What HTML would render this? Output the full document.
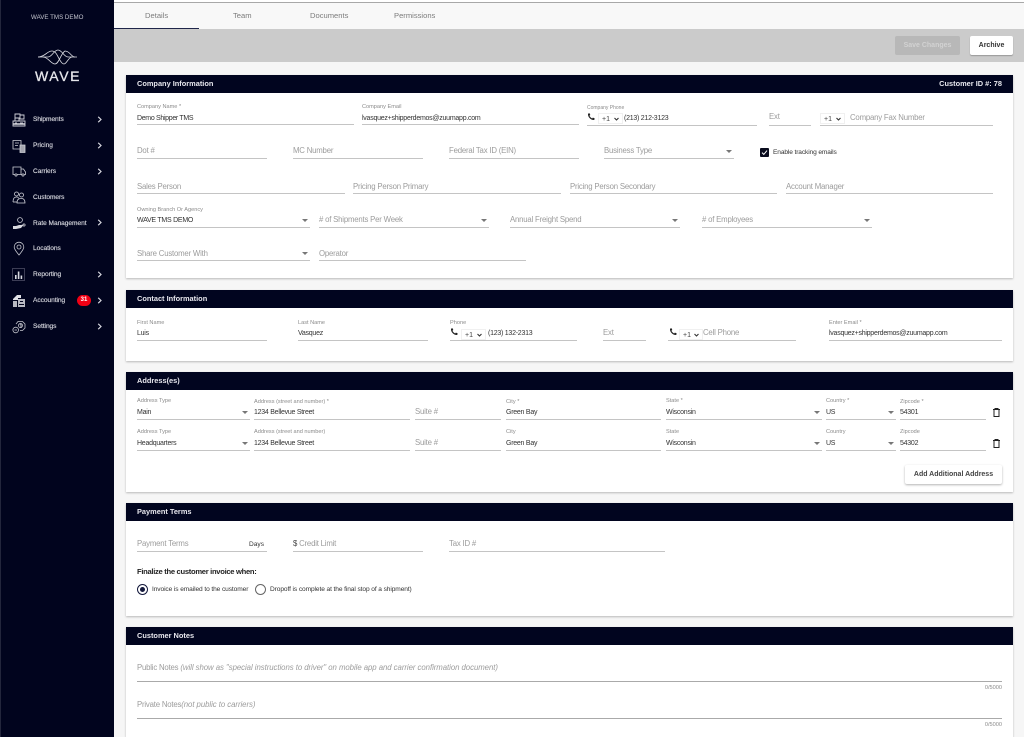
<!DOCTYPE html>
<html><head><meta charset="utf-8"><style>
*{box-sizing:border-box}
html,body{margin:0;padding:0;width:1024px;height:737px;overflow:hidden;background:#f6f6f6;font-family:"Liberation Sans",sans-serif}
#p{position:relative;width:1024px;height:737px;overflow:hidden;filter:blur(.35px)}
.a,.l,.v,.h,.u,.n,.c,.hd,.sel{position:absolute}
.l{font-size:5.6px;color:#8b8b8b;white-space:nowrap;line-height:7px;margin-top:1px}
.v{font-size:7px;letter-spacing:-.25px;color:#333;white-space:nowrap;line-height:10px;margin-top:1px}
.s{font-size:6.6px;margin-top:0}
.h{font-size:7.8px;color:#9c9c9c;white-space:nowrap;line-height:10px;letter-spacing:-.2px}
.h i{letter-spacing:-.05px}
.u{height:1px;background:#c4c4c4}
.c{left:126px;width:887px;background:#fff;box-shadow:0 1px 2px rgba(0,0,0,.25)}
.hd{left:126px;width:887px;height:18px;background:#01051f;color:#e8e8ee;font-size:7.4px;font-weight:bold;line-height:18px;padding-left:11px}
.n{left:33px;color:#d5d6dd;font-size:6.6px;letter-spacing:-.05px;-webkit-text-stroke:.15px #d5d6dd;line-height:10px;white-space:nowrap;margin-top:1px}
.ch{position:absolute;left:97px;width:5px;height:7px}
.ar{position:absolute;width:0;height:0;border-left:3px solid transparent;border-right:3px solid transparent;border-top:3px solid #777}
.sel{font-size:7px;color:#444;height:11px;width:25px;line-height:11px;padding-left:3px;background:#fff;border:1px solid #f0f0f0}
.sel svg{position:absolute;right:3px;top:3px}
svg{position:absolute;overflow:visible}
</style></head><body><div id="p">

<!-- sidebar -->
<div class="a" style="left:0;top:0;width:114px;height:737px;background:#01041e;border-left:1px solid #23263c"></div>
<div class="a" style="left:31px;top:14px;color:#c4c5cf;font-size:6.2px;line-height:8px;white-space:nowrap">WAVE TMS DEMO</div>
<svg style="left:37px;top:48px" width="41" height="18" viewBox="0 0 41 18" fill="none" stroke="#d9dae0" stroke-width=".8">
<path d="M1 9H11C15 9 17 2 21 2S27 9 31 9H40"/><path d="M1 9C8 9 10 3 15 3S21 11 25 15S31 9 35 9"/><path d="M6 9C11 9 14 16 18 16S24 5 28 3C33 3 34 9 38 9"/></svg>
<div class="a" style="left:35px;top:69px;width:48px;color:#e6e6eb;font-size:14px;line-height:15px;letter-spacing:1.6px;-webkit-text-stroke:.3px #e6e6eb;white-space:nowrap">WAVE</div>

<div class="n" style="top:114px;">Shipments</div>
<div class="n" style="top:140px;">Pricing</div>
<div class="n" style="top:166px;">Carriers</div>
<div class="n" style="top:192px;">Customers</div>
<div class="n" style="top:218px;">Rate Management</div>
<div class="n" style="top:243px;">Locations</div>
<div class="n" style="top:269px;">Reporting</div>
<div class="n" style="top:295px;">Accounting</div>
<div class="n" style="top:321px;">Settings</div>

<svg class="ch" style="top:116px" viewBox="0 0 5 7" fill="none" stroke="#d5d6dd" stroke-width="1.2"><path d="M1.2 .8L4 3.5L1.2 6.2"/></svg>
<svg class="ch" style="top:142px" viewBox="0 0 5 7" fill="none" stroke="#d5d6dd" stroke-width="1.2"><path d="M1.2 .8L4 3.5L1.2 6.2"/></svg>
<svg class="ch" style="top:168px" viewBox="0 0 5 7" fill="none" stroke="#d5d6dd" stroke-width="1.2"><path d="M1.2 .8L4 3.5L1.2 6.2"/></svg>
<svg class="ch" style="top:219px" viewBox="0 0 5 7" fill="none" stroke="#d5d6dd" stroke-width="1.2"><path d="M1.2 .8L4 3.5L1.2 6.2"/></svg>
<svg class="ch" style="top:271px" viewBox="0 0 5 7" fill="none" stroke="#d5d6dd" stroke-width="1.2"><path d="M1.2 .8L4 3.5L1.2 6.2"/></svg>
<svg class="ch" style="top:297px" viewBox="0 0 5 7" fill="none" stroke="#d5d6dd" stroke-width="1.2"><path d="M1.2 .8L4 3.5L1.2 6.2"/></svg>
<svg class="ch" style="top:323px" viewBox="0 0 5 7" fill="none" stroke="#d5d6dd" stroke-width="1.2"><path d="M1.2 .8L4 3.5L1.2 6.2"/></svg>

<!-- nav icons -->
<svg style="left:12px;top:113px" width="14" height="14" viewBox="0 0 14 14" fill="none" stroke="#d0d1d8" stroke-width=".9"><path d="M3 1H8V5H3ZM8 2H12V6H8ZM1 8H13V13H1Z"/><path d="M3 5V8M7 5V8M3 10H5M8 10H11" /><path d="M1 11H13" stroke-width="1.6"/></svg>
<svg style="left:12px;top:139px" width="14" height="14" viewBox="0 0 14 14" fill="none" stroke="#d0d1d8" stroke-width=".8"><path d="M1 1.5H9V10H1ZM3 4H7M3 6.5H6"/><path d="M8 6H13V13.5H8Z" fill="#a5a6b0"/></svg>
<svg style="left:12px;top:165px" width="14" height="12" viewBox="0 0 14 12" fill="none" stroke="#d0d1d8" stroke-width=".8"><path d="M3 9.5H1V2H9V9.5H5M9 4H11.5L13.5 7V9.5H12M9 9.5H10"/><circle cx="4" cy="10" r="1.1"/><circle cx="11" cy="10" r="1.1"/></svg>
<svg style="left:12px;top:191px" width="14" height="13" viewBox="0 0 14 13" fill="none" stroke="#d0d1d8" stroke-width=".8"><circle cx="4.5" cy="3" r="2"/><circle cx="9.5" cy="4" r="2"/><path d="M1 11C1 7 3 6 4.5 6S7 7 7 8M5 12C5 8 7 7.5 9.5 7.5S13 9 13 12Z"/><path d="M1 11H5"/></svg>
<svg style="left:12px;top:217px" width="14" height="14" viewBox="0 0 14 14" fill="none" stroke="#d0d1d8" stroke-width=".8"><circle cx="8" cy="3" r="2.4"/><path d="M1 9H4L7 8H9L12 7.5L9 11L4 12H1Z" fill="#d8d9df" stroke="none"/><circle cx="12" cy="8" r="1.1"/></svg>
<svg style="left:13px;top:242px" width="12" height="14" viewBox="0 0 12 14" fill="none" stroke="#c4c5cd" stroke-width=".8"><path d="M6 13C3 9 1.2 7.5 1.2 5A4.8 4.8 0 0 1 10.8 5C10.8 7.5 9 9 6 13Z"/><circle cx="6" cy="5" r="2"/></svg>
<svg style="left:12px;top:268px" width="13" height="13" viewBox="0 0 13 13"><rect x=".5" y=".5" width="12" height="12" fill="none" stroke="#4b4d63" stroke-width=".8"/><path d="M3 7H4.6V11H3ZM5.8 3.5H7.4V11H5.8ZM8.6 7.5H10.2V11H8.6Z" fill="#d8d9df"/></svg>
<svg style="left:12px;top:294px" width="14" height="14" viewBox="0 0 14 14" fill="#b9bac3"><path d="M1 5L5 1H9V4H6V6H1Z" fill="#e0e1e6"/><path d="M1 7H5V13H1ZM6 5H13V13H6Z"/><path d="M8 7H11V8H8ZM7 10H12V11H7Z" fill="#01041e"/></svg>
<svg style="left:12px;top:320px" width="14" height="14" viewBox="0 0 14 14" fill="none" stroke="#c4c5cd" stroke-width=".8"><path d="M4 4L6 1.5H10.5L13 4V8L10.5 10.5H8"/><circle cx="8.5" cy="5.5" r="2"/><path d="M9 8V4H7.5" stroke-width="1"/><circle cx="3.7" cy="10" r="2.8"/><path d="M2.5 10H5"/></svg>

<div class="a" style="left:77px;top:295px;width:14px;height:11px;border-radius:6px;background:#f00014;color:#fff;font-size:6px;font-weight:bold;line-height:11px;text-align:center">31</div>

<!-- top -->
<div class="a" style="left:114px;top:0;width:910px;height:3px;background:#fff;border-bottom:1px solid #a8a8a8;border-top:1px solid #fff"></div>
<div class="a" style="left:114px;top:3px;width:910px;height:26px;background:#f8f8f8"></div>
<div class="a" style="left:114px;top:28px;width:85px;height:1px;background:#20264a"></div>
<div class="a" style="left:145px;top:11px;font-size:7.6px;color:#7c7c7c;line-height:10px">Details</div>
<div class="a" style="left:233px;top:11px;font-size:7.6px;color:#7c7c7c;line-height:10px">Team</div>
<div class="a" style="left:310px;top:11px;font-size:7.6px;color:#7c7c7c;line-height:10px">Documents</div>
<div class="a" style="left:394px;top:11px;font-size:7.6px;color:#7c7c7c;line-height:10px">Permissions</div>
<div class="a" style="left:114px;top:29px;width:910px;height:33px;background:#cbcbcb"></div>
<div class="a" style="left:895px;top:36px;width:65px;height:19px;border-radius:2px;background:#b8b8b8;color:#d2d2d2;font-size:7px;font-weight:bold;line-height:19px;text-align:center">Save Changes</div>
<div class="a" style="left:970px;top:36px;width:43px;height:19px;border-radius:2px;background:#fff;color:#333;font-size:7px;font-weight:bold;line-height:19px;text-align:center;box-shadow:0 1px 1px rgba(0,0,0,.25)">Archive</div>

<!-- cards -->
<div class="c" style="top:75px;height:203px"></div>
<div class="c" style="top:290px;height:71px"></div>
<div class="c" style="top:372px;height:120px"></div>
<div class="c" style="top:503px;height:113px"></div>
<div class="c" style="top:627px;height:110px"></div>
<div class="hd" style="top:75px">Company Information<span style="position:absolute;right:11px;top:0">Customer ID #: 78</span></div>
<div class="hd" style="top:290px">Contact Information</div>
<div class="hd" style="top:372px">Address(es)</div>
<div class="hd" style="top:503px">Payment Terms</div>
<div class="hd" style="top:627px">Customer Notes</div>

<!-- Company row 1 -->
<div class="l" style="left:137px;top:103px">Company Name *</div>
<div class="v" style="left:137px;top:113px;letter-spacing:-.32px">Demo Shipper TMS</div>
<div class="u" style="left:137px;top:124px;width:217px"></div>
<div class="l" style="left:362px;top:103px">Company Email</div>
<div class="v" style="left:362px;top:113px">lvasquez+shipperdemos@zuumapp.com</div>
<div class="u" style="left:362px;top:124px;width:217px"></div>
<div class="l" style="left:587px;top:104px;font-size:5px">Company Phone</div>
<svg style="left:587px;top:113px" width="8" height="8" viewBox="0 0 8 8"><path d="M1 .6L2.6.3L3.3 2L2.4 2.8C2.9 3.9 3.9 4.9 5.1 5.5L5.9 4.6L7.6 5.3L7.3 7C4 7.4.6 4 1 .6Z" fill="#222"/></svg>
<div class="sel" style="left:598px;top:113px">+1<svg width="5" height="4" viewBox="0 0 5 4" fill="none" stroke="#333" stroke-width="1.1"><path d="M.5 1L2.5 3L4.5 1"/></svg></div>
<div class="v" style="left:624px;top:113px">(213) 212-3123</div>
<div class="u" style="left:587px;top:125px;width:170px"></div>
<div class="h" style="left:769px;top:112px">Ext</div>
<div class="u" style="left:769px;top:125px;width:42px"></div>
<div class="sel" style="left:820px;top:113px">+1<svg width="5" height="4" viewBox="0 0 5 4" fill="none" stroke="#333" stroke-width="1.1"><path d="M.5 1L2.5 3L4.5 1"/></svg></div>
<div class="h" style="left:850px;top:113px">Company Fax Number</div>
<div class="u" style="left:820px;top:125px;width:173px"></div>

<!-- row 2 -->
<div class="h" style="left:137px;top:146px">Dot #</div><div class="u" style="left:137px;top:158px;width:130px"></div>
<div class="h" style="left:293px;top:146px">MC Number</div><div class="u" style="left:293px;top:158px;width:130px"></div>
<div class="h" style="left:449px;top:146px">Federal Tax ID (EIN)</div><div class="u" style="left:449px;top:158px;width:130px"></div>
<div class="h" style="left:604px;top:146px">Business Type</div><div class="u" style="left:604px;top:158px;width:130px"></div>
<div class="ar" style="left:726px;top:150px"></div>
<div class="a" style="left:760px;top:148px;width:9px;height:9px;background:#0a0c1e;border-radius:1px"></div>
<svg style="left:760px;top:148px" width="9" height="9" viewBox="0 0 9 9" fill="none" stroke="#fff" stroke-width="1"><path d="M2 4.6L3.8 6.4L7 2.6"/></svg>
<div class="v s" style="left:773px;top:148px;letter-spacing:-.12px">Enable tracking emails</div>

<!-- row 3 -->
<div class="h" style="left:137px;top:182px">Sales Person</div><div class="u" style="left:137px;top:193px;width:208px"></div>
<div class="h" style="left:353px;top:182px">Pricing Person Primary</div><div class="u" style="left:353px;top:193px;width:208px"></div>
<div class="h" style="left:570px;top:182px">Pricing Person Secondary</div><div class="u" style="left:570px;top:193px;width:207px"></div>
<div class="h" style="left:786px;top:182px">Account Manager</div><div class="u" style="left:786px;top:193px;width:207px"></div>

<!-- row 4 -->
<div class="l" style="left:137px;top:206px">Owning Branch Or Agency</div>
<div class="v" style="left:137px;top:215px">WAVE TMS DEMO</div><div class="u" style="left:137px;top:227px;width:173px"></div><div class="ar" style="left:302px;top:219px"></div>
<div class="h" style="left:319px;top:215px"># of Shipments Per Week</div><div class="u" style="left:319px;top:227px;width:170px"></div><div class="ar" style="left:481px;top:219px"></div>
<div class="h" style="left:510px;top:215px">Annual Freight Spend</div><div class="u" style="left:510px;top:227px;width:170px"></div><div class="ar" style="left:672px;top:219px"></div>
<div class="h" style="left:702px;top:215px"># of Employees</div><div class="u" style="left:702px;top:227px;width:170px"></div><div class="ar" style="left:864px;top:219px"></div>

<!-- row 5 -->
<div class="h" style="left:137px;top:249px">Share Customer With</div><div class="u" style="left:137px;top:260px;width:173px"></div><div class="ar" style="left:302px;top:252px"></div>
<div class="h" style="left:319px;top:249px">Operator</div><div class="u" style="left:319px;top:260px;width:207px"></div>

<!-- Contact -->
<div class="l" style="left:137px;top:319px">First Name</div><div class="v" style="left:137px;top:328px">Luis</div><div class="u" style="left:137px;top:340px;width:130px"></div>
<div class="l" style="left:298px;top:319px">Last Name</div><div class="v" style="left:298px;top:328px">Vasquez</div><div class="u" style="left:298px;top:340px;width:130px"></div>
<div class="l" style="left:450px;top:319px">Phone</div>
<svg style="left:450px;top:328px" width="8" height="8" viewBox="0 0 8 8"><path d="M1 .6L2.6.3L3.3 2L2.4 2.8C2.9 3.9 3.9 4.9 5.1 5.5L5.9 4.6L7.6 5.3L7.3 7C4 7.4.6 4 1 .6Z" fill="#222"/></svg>
<div class="sel" style="left:461px;top:329px">+1<svg width="5" height="4" viewBox="0 0 5 4" fill="none" stroke="#333" stroke-width="1.1"><path d="M.5 1L2.5 3L4.5 1"/></svg></div>
<div class="v" style="left:488px;top:328px">(123) 132-2313</div><div class="u" style="left:450px;top:340px;width:127px"></div>
<div class="h" style="left:603px;top:328px">Ext</div><div class="u" style="left:603px;top:340px;width:43px"></div>
<svg style="left:669px;top:328px" width="8" height="8" viewBox="0 0 8 8"><path d="M1 .6L2.6.3L3.3 2L2.4 2.8C2.9 3.9 3.9 4.9 5.1 5.5L5.9 4.6L7.6 5.3L7.3 7C4 7.4.6 4 1 .6Z" fill="#222"/></svg>
<div class="sel" style="left:679px;top:329px;width:24px">+1<svg width="5" height="4" viewBox="0 0 5 4" fill="none" stroke="#333" stroke-width="1.1"><path d="M.5 1L2.5 3L4.5 1"/></svg></div>
<div class="h" style="left:703px;top:328px">Cell Phone</div><div class="u" style="left:668px;top:340px;width:128px"></div>
<div class="l" style="left:829px;top:319px">Enter Email *</div><div class="v" style="left:829px;top:328px">lvasquez+shipperdemos@zuumapp.com</div><div class="u" style="left:829px;top:340px;width:173px"></div>

<!-- Address row 1 -->
<div class="l" style="left:137px;top:397px">Address Type</div><div class="v" style="left:137px;top:407px">Main</div><div class="u" style="left:137px;top:419px;width:113px"></div><div class="ar" style="left:242px;top:411px"></div>
<div class="l" style="left:254px;top:398px">Address (street and number) *</div><div class="v" style="left:254px;top:407px">1234 Bellevue Street</div><div class="u" style="left:254px;top:419px;width:156px"></div>
<div class="h" style="left:415px;top:407px">Suite #</div><div class="u" style="left:415px;top:419px;width:86px"></div>
<div class="l" style="left:506px;top:398px">City *</div><div class="v" style="left:506px;top:407px">Green Bay</div><div class="u" style="left:506px;top:419px;width:155px"></div>
<div class="l" style="left:666px;top:397px">State *</div><div class="v" style="left:666px;top:407px">Wisconsin</div><div class="u" style="left:666px;top:419px;width:156px"></div><div class="ar" style="left:814px;top:411px"></div>
<div class="l" style="left:826px;top:397px">Country *</div><div class="v" style="left:826px;top:407px">US</div><div class="u" style="left:826px;top:419px;width:70px"></div><div class="ar" style="left:888px;top:411px"></div>
<div class="l" style="left:900px;top:398px">Zipcode *</div><div class="v" style="left:900px;top:407px">54301</div><div class="u" style="left:900px;top:419px;width:86px"></div>
<svg style="left:993px;top:408px" width="7" height="9" viewBox="0 0 7 9" fill="none" stroke="#222" stroke-width="1"><path d="M0 1.5H7M2 1.5V.5H5V1.5M1 2V8.5H6V2"/></svg>

<!-- Address row 2 -->
<div class="l" style="left:137px;top:428px">Address Type</div><div class="v" style="left:137px;top:438px">Headquarters</div><div class="u" style="left:137px;top:450px;width:113px"></div><div class="ar" style="left:242px;top:442px"></div>
<div class="l" style="left:254px;top:428px">Address (street and number)</div><div class="v" style="left:254px;top:438px">1234 Bellevue Street</div><div class="u" style="left:254px;top:450px;width:156px"></div>
<div class="h" style="left:415px;top:438px">Suite #</div><div class="u" style="left:415px;top:450px;width:86px"></div>
<div class="l" style="left:506px;top:428px">City</div><div class="v" style="left:506px;top:438px">Green Bay</div><div class="u" style="left:506px;top:450px;width:155px"></div>
<div class="l" style="left:666px;top:428px">State</div><div class="v" style="left:666px;top:438px">Wisconsin</div><div class="u" style="left:666px;top:450px;width:156px"></div><div class="ar" style="left:814px;top:442px"></div>
<div class="l" style="left:826px;top:428px">Country</div><div class="v" style="left:826px;top:438px">US</div><div class="u" style="left:826px;top:450px;width:70px"></div><div class="ar" style="left:888px;top:442px"></div>
<div class="l" style="left:900px;top:428px">Zipcode</div><div class="v" style="left:900px;top:438px">54302</div><div class="u" style="left:900px;top:450px;width:86px"></div>
<svg style="left:993px;top:439px" width="7" height="9" viewBox="0 0 7 9" fill="none" stroke="#222" stroke-width="1"><path d="M0 1.5H7M2 1.5V.5H5V1.5M1 2V8.5H6V2"/></svg>

<div class="a" style="left:905px;top:465px;width:97px;height:19px;background:#fff;border-radius:2px;box-shadow:0 1px 2px rgba(0,0,0,.3);color:#444;font-size:7px;font-weight:bold;line-height:19px;text-align:center;white-space:nowrap">Add Additional Address</div>

<!-- Payment -->
<div class="h" style="left:137px;top:539px">Payment Terms</div><div class="v s" style="left:249px;top:540px;letter-spacing:0">Days</div><div class="u" style="left:137px;top:551px;width:130px"></div>
<div class="h" style="left:293px;top:539px"><span style="color:#444">$</span> Credit Limit</div><div class="u" style="left:293px;top:551px;width:130px"></div>
<div class="h" style="left:449px;top:539px">Tax ID #</div><div class="u" style="left:449px;top:551px;width:216px"></div>
<div class="a" style="left:137px;top:567px;font-size:7.6px;letter-spacing:-.3px;font-weight:bold;color:#222;line-height:10px;white-space:nowrap">Finalize the customer invoice when:</div>
<div class="a" style="left:137px;top:584px;width:11px;height:11px;border:1.2px solid #14193c;border-radius:50%"></div>
<div class="a" style="left:140px;top:587px;width:5px;height:5px;background:#14193c;border-radius:50%"></div>
<div class="v s" style="left:152px;top:585px;letter-spacing:-.1px">Invoice is emailed to the customer</div>
<div class="a" style="left:255px;top:584px;width:11px;height:11px;border:1px solid #666;border-radius:50%"></div>
<div class="v s" style="left:270px;top:585px;letter-spacing:-.1px">Dropoff is complete at the final stop of a shipment)</div>

<!-- Notes -->
<div class="h" style="left:137px;top:663px">Public Notes <i>(will show as "special instructions to driver" on mobile app and carrier confirmation document)</i></div>
<div class="u" style="left:137px;top:681px;width:865px;background:#aaa"></div>
<div class="l" style="right:22px;top:684px">0/5000</div>
<div class="h" style="left:137px;top:700px">Private Notes<i>(not public to carriers)</i></div>
<div class="u" style="left:137px;top:718px;width:865px;background:#aaa"></div>
<div class="l" style="right:22px;top:721px">0/5000</div>

</div></body></html>
